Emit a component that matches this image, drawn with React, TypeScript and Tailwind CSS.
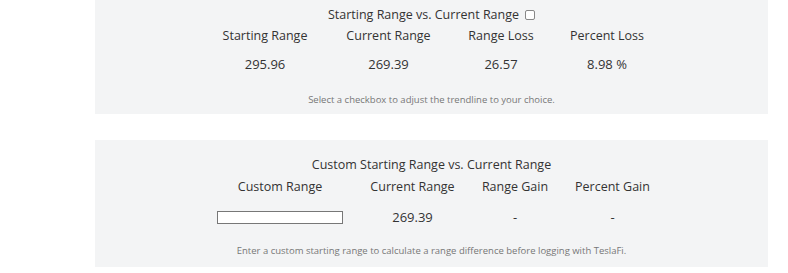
const font = { fontFamily: '"Open Sans", "Liberation Sans", sans-serif' };

const lossCols = [
  { label: "Starting Range", value: "295.96", w: "w-[122px]" },
  { label: "Current Range", value: "269.39", w: "w-[125px]" },
  { label: "Range Loss", value: "26.57", w: "w-[100px]" },
  { label: "Percent Loss", value: "8.98 %", w: "w-[112px]" },
];

const gainCols = [
  { label: "Current Range", value: "269.39", w: "w-[112px]" },
  { label: "Range Gain", value: "-", w: "w-[93px]" },
  { label: "Percent Gain", value: "-", w: "w-[102px]" },
];

export default function App() {
  return (
    <div className="bg-white w-[788px] h-[273px] overflow-hidden text-[#333]" style={font}>
      {/* Starting vs current */}
      <div className="ml-[95px] w-[673px] bg-[#f3f4f5] pt-[6px] pb-[7px]">
        <div className="flex items-center justify-center h-[17px] text-[12.5px] leading-[17px]">
          <span>Starting Range vs. Current Range</span>
          <span className="ml-[6px] inline-block w-[10px] h-[10px] border border-[#888] rounded-[2px] bg-white" />
        </div>
        <div className="flex justify-center mt-[4px] pl-[4px]">
          {lossCols.map((c) => (
            <div key={c.label} className={`${c.w} text-center text-[12.5px] leading-[17px]`}>
              {c.label}
            </div>
          ))}
        </div>
        <div className="flex justify-center mt-[12px] pl-[4px]">
          {lossCols.map((c) => (
            <div key={c.label} className={`${c.w} text-center text-[13px] leading-[17px]`}>
              {c.value}
            </div>
          ))}
        </div>
        <div className="mt-[20px] text-center text-[9.5px] leading-[14px] text-[#777]">
          Select a checkbox to adjust the trendline to your choice.
        </div>
      </div>

      {/* Custom starting range */}
      <div className="ml-[95px] w-[673px] bg-[#f3f4f5] mt-[26px] pt-[16px] pb-[9px]">
        <div className="text-center h-[17px] text-[12.5px] leading-[17px]">
          Custom Starting Range vs. Current Range
        </div>
        <div className="flex justify-center mt-[5px] pl-[4px]">
          <div className="w-[153px] text-center text-[12.5px] leading-[17px]">Custom Range</div>
          {gainCols.map((c) => (
            <div key={c.label} className={`${c.w} text-center text-[12.5px] leading-[17px]`}>
              {c.label}
            </div>
          ))}
        </div>
        <div className="flex justify-center items-center mt-[14px] pl-[4px]">
          <div className="w-[153px] flex justify-center">
            <input
              type="text"
              className="w-[126px] h-[13px] border border-[#777] bg-white outline-none"
            />
          </div>
          {gainCols.map((c) => (
            <div key={c.label} className={`${c.w} text-center text-[13px] leading-[17px]`}>
              {c.value}
            </div>
          ))}
        </div>
        <div className="mt-[18px] text-center text-[9.5px] leading-[14px] text-[#777]">
          Enter a custom starting range to calculate a range difference before logging with TeslaFi.
        </div>
      </div>
    </div>
  );
}
